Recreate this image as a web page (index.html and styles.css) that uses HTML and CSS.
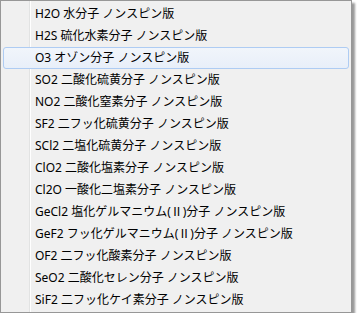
FILE: index.html
```html
<!DOCTYPE html>
<html>
<head>
    <meta charset="UTF-8">
    <title>Molecule Menu</title>
    <link rel="stylesheet" href="styles.css">
</head>
<body>
    <div class="menu">
        <div class="item">H2O 水分子 ノンスピン版</div>
        <div class="item">H2S 硫化水素分子 ノンスピン版</div>
        <div class="item active">O3 オゾン分子 ノンスピン版</div>
        <div class="item">SO2 二酸化硫黄分子 ノンスピン版</div>
        <div class="item">NO2 二酸化窒素分子 ノンスピン版</div>
        <div class="item">SF2 二フッ化硫黄分子 ノンスピン版</div>
        <div class="item">SCl2 二塩化硫黄分子 ノンスピン版</div>
        <div class="item">ClO2 二酸化塩素分子 ノンスピン版</div>
        <div class="item">Cl2O 一酸化二塩素分子 ノンスピン版</div>
        <div class="item">GeCl2 塩化ゲルマニウム(Ⅱ)分子 ノンスピン版</div>
        <div class="item">GeF2 フッ化ゲルマニウム(Ⅱ)分子 ノンスピン版</div>
        <div class="item">OF2 二フッ化酸素分子 ノンスピン版</div>
        <div class="item">SeO2 二酸化セレン分子 ノンスピン版</div>
        <div class="item">SiF2 二フッ化ケイ素分子 ノンスピン版</div>
    </div>
</body>
</html>
```

FILE: styles.css
```css
body {
    margin: 0;
    background: #fff;
    font-family: "Segoe UI", "Noto Sans", "Noto Sans CJK JP", sans-serif;
    font-size: 12px;
    color: #000;
}
.menu {
    width: 346px;
    padding: 2px 2px 1px 2px;
    border: 1px solid #979797;
    background:
        linear-gradient(to right, transparent 28px, #e2e3e3 28px, #e2e3e3 29px, #fff 29px, #fff 30px, transparent 30px),
        #f0f0f0;
    box-shadow: 3px 3px 2px rgba(0, 0, 0, 0.4);
}
.item {
    height: 20px;
    border: 1px solid transparent;
    border-radius: 3px;
    padding-left: 31px;
    display: flex;
    align-items: center;
    line-height: 20px;
    white-space: nowrap;
}
.item.active {
    border-color: #aeccf3;
    background: linear-gradient(to bottom, #f1f5fb 0%, #e8eff9 100%);
}
```
